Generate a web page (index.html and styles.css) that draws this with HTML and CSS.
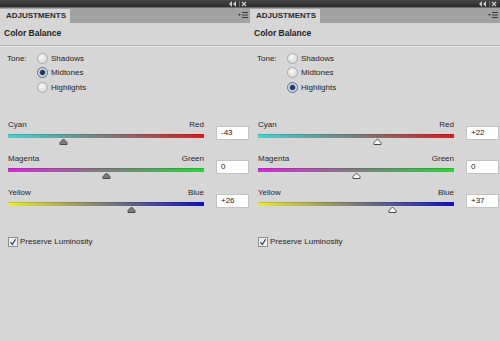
FILE: index.html
```html
<!DOCTYPE html>
<html>
<head>
  <meta charset="utf-8">
  <title>Adjustments</title>
  <link rel="stylesheet" href="styles.css">
</head>
<body>
<div class="panels">

  <div class="panel">
    <div class="titlebar">
      <svg class="tb-icons" width="18" height="6" viewBox="0 0 18 6">
        <polygon points="3,0 3,6 0,3" fill="#c9c9c9"/>
        <polygon points="7,0 7,6 4,3" fill="#c9c9c9"/>
        <rect x="10" y="0" width="1" height="6" fill="#6a6a6a"/>
        <path d="M13 1 L17 5 M17 1 L13 5" stroke="#c9c9c9" stroke-width="1.3"/>
      </svg>
    </div>
    <div class="tabrow">
      <div class="tab">ADJUSTMENTS</div>
      <svg class="menu" width="10" height="6" viewBox="0 0 10 6">
        <polygon points="0,2 3,2 1.5,4" fill="#3a3a3a"/>
        <rect x="4" y="0" width="6" height="1" fill="#3a3a3a"/>
        <rect x="4" y="2.5" width="6" height="1" fill="#3a3a3a"/>
        <rect x="4" y="5" width="6" height="1" fill="#3a3a3a"/>
      </svg>
    </div>
    <div class="content">
      <div class="heading">Color Balance</div>

      <div class="tone">
        <div class="tone-label">Tone:</div>
        <div class="radios">
          <div class="radio-row"><span class="radio"></span>Shadows</div>
          <div class="radio-row"><span class="radio on"></span>Midtones</div>
          <div class="radio-row"><span class="radio"></span>Highlights</div>
        </div>
      </div>

      <div class="sliders">
        <div class="slider-row">
          <div class="slider">
            <div class="ends"><span>Cyan</span><span>Red</span></div>
            <div class="track cyan-red">
              <svg class="thumb" style="left: 28.5%" width="9" height="7" viewBox="0 0 9 7"><path d="M1 6.5 V4.5 L4.5 1 L8 4.5 V6.5 Z" fill="#7c7c7c" stroke="#4a4a4a"/></svg>
            </div>
          </div>
          <div class="value">-43</div>
        </div>
        <div class="slider-row">
          <div class="slider">
            <div class="ends"><span>Magenta</span><span>Green</span></div>
            <div class="track magenta-green">
              <svg class="thumb" style="left: 50%" width="9" height="7" viewBox="0 0 9 7"><path d="M1 6.5 V4.5 L4.5 1 L8 4.5 V6.5 Z" fill="#7c7c7c" stroke="#4a4a4a"/></svg>
            </div>
          </div>
          <div class="value">0</div>
        </div>
        <div class="slider-row">
          <div class="slider">
            <div class="ends"><span>Yellow</span><span>Blue</span></div>
            <div class="track yellow-blue">
              <svg class="thumb" style="left: 63%" width="9" height="7" viewBox="0 0 9 7"><path d="M1 6.5 V4.5 L4.5 1 L8 4.5 V6.5 Z" fill="#7c7c7c" stroke="#4a4a4a"/></svg>
            </div>
          </div>
          <div class="value">+26</div>
        </div>
      </div>

      <div class="check-row">
        <svg class="checkbox" width="10" height="10" viewBox="0 0 10 10">
          <rect x="0.5" y="0.5" width="9" height="9" fill="#eeeeee" stroke="#8e8e8e"/>
          <path d="M2.5 5.2 L4.3 7.5 L7.6 2.2" fill="none" stroke="#2d3f66" stroke-width="1.2"/>
        </svg>
        Preserve Luminosity
      </div>
    </div>
  </div>

  <div class="panel">
    <div class="titlebar">
      <svg class="tb-icons" width="18" height="6" viewBox="0 0 18 6">
        <polygon points="3,0 3,6 0,3" fill="#c9c9c9"/>
        <polygon points="7,0 7,6 4,3" fill="#c9c9c9"/>
        <rect x="10" y="0" width="1" height="6" fill="#6a6a6a"/>
        <path d="M13 1 L17 5 M17 1 L13 5" stroke="#c9c9c9" stroke-width="1.3"/>
      </svg>
    </div>
    <div class="tabrow">
      <div class="tab">ADJUSTMENTS</div>
      <svg class="menu" width="10" height="6" viewBox="0 0 10 6">
        <polygon points="0,2 3,2 1.5,4" fill="#3a3a3a"/>
        <rect x="4" y="0" width="6" height="1" fill="#3a3a3a"/>
        <rect x="4" y="2.5" width="6" height="1" fill="#3a3a3a"/>
        <rect x="4" y="5" width="6" height="1" fill="#3a3a3a"/>
      </svg>
    </div>
    <div class="content">
      <div class="heading">Color Balance</div>

      <div class="tone">
        <div class="tone-label">Tone:</div>
        <div class="radios">
          <div class="radio-row"><span class="radio"></span>Shadows</div>
          <div class="radio-row"><span class="radio"></span>Midtones</div>
          <div class="radio-row"><span class="radio on"></span>Highlights</div>
        </div>
      </div>

      <div class="sliders">
        <div class="slider-row">
          <div class="slider">
            <div class="ends"><span>Cyan</span><span>Red</span></div>
            <div class="track cyan-red">
              <svg class="thumb" style="left: 61%" width="9" height="7" viewBox="0 0 9 7"><path d="M1 6.5 V4.5 L4.5 1 L8 4.5 V6.5 Z" fill="#ffffff" stroke="#4a4a4a"/></svg>
            </div>
          </div>
          <div class="value">+22</div>
        </div>
        <div class="slider-row">
          <div class="slider">
            <div class="ends"><span>Magenta</span><span>Green</span></div>
            <div class="track magenta-green">
              <svg class="thumb" style="left: 50%" width="9" height="7" viewBox="0 0 9 7"><path d="M1 6.5 V4.5 L4.5 1 L8 4.5 V6.5 Z" fill="#ffffff" stroke="#4a4a4a"/></svg>
            </div>
          </div>
          <div class="value">0</div>
        </div>
        <div class="slider-row">
          <div class="slider">
            <div class="ends"><span>Yellow</span><span>Blue</span></div>
            <div class="track yellow-blue">
              <svg class="thumb" style="left: 68.5%" width="9" height="7" viewBox="0 0 9 7"><path d="M1 6.5 V4.5 L4.5 1 L8 4.5 V6.5 Z" fill="#ffffff" stroke="#4a4a4a"/></svg>
            </div>
          </div>
          <div class="value">+37</div>
        </div>
      </div>

      <div class="check-row">
        <svg class="checkbox" width="10" height="10" viewBox="0 0 10 10">
          <rect x="0.5" y="0.5" width="9" height="9" fill="#eeeeee" stroke="#8e8e8e"/>
          <path d="M2.5 5.2 L4.3 7.5 L7.6 2.2" fill="none" stroke="#2d3f66" stroke-width="1.2"/>
        </svg>
        Preserve Luminosity
      </div>
    </div>
  </div>

</div>
</body>
</html>
```

FILE: styles.css
```css
body {
  margin: 0;
  background: #d6d6d6;
  font-family: "Liberation Sans", Arial, sans-serif;
  font-size: 8px;
  color: #1e1e1e;
}

.panels {
  display: flex;
  height: 341px;
}

.panel {
  width: 250px;
  display: flex;
  flex-direction: column;
}

/* barra escura do topo */
.titlebar {
  height: 7px;
  background: linear-gradient(#454545, #2c2c2c);
  border-bottom: 1px solid #6b6b6b;
  display: flex;
  justify-content: flex-end;
  align-items: center;
  padding-right: 2px;
}

.tb-icons {
  display: block;
  margin-right: 1px;
}

.tabrow {
  height: 15px;
  background: #a2a2a2;
  display: flex;
  align-items: flex-end;
  justify-content: space-between;
}

.tab {
  width: 64px;
  height: 14px;
  padding-left: 6px;
  background: #d6d6d6;
  font-weight: bold;
  font-size: 8px;
  line-height: 14px;
  color: #2a2a2a;
}

.menu {
  display: block;
  margin: 0 2px 5px 0;
}

.content {
  flex: 1;
}

.heading {
  height: 23px;
  padding: 5px 0 0 4px;
  box-sizing: border-box;
  font-weight: bold;
  font-size: 8.5px;
  line-height: 10px;
  border-bottom: 1px solid #b4b4b4;
  box-shadow: 0 1px 0 #e6e6e6;
}

.tone {
  display: flex;
  margin-top: 5px;
  padding-left: 7px;
}

.tone-label {
  width: 30px;
  line-height: 14.5px;
  padding-top: 1px;
}

.radio-row {
  display: flex;
  align-items: center;
  height: 14.5px;
  gap: 3px;
}

.radio {
  width: 9px;
  height: 9px;
  border-radius: 50%;
  border: 1px solid #a9a9a9;
  background: radial-gradient(circle at 40% 35%, #f7f7f7, #d2d2d2);
  box-sizing: content-box;
  position: relative;
}

.radio.on {
  border-color: #56698a;
  background: radial-gradient(circle, #1c2f52 0, #2b4673 2.2px, #c8d2e0 3.3px, #e8ecf2 5px);
}

.sliders {
  margin-top: 25px;
}

.slider-row {
  display: flex;
  height: 34px;
}

.slider {
  width: 196px;
  margin-left: 8px;
}

.ends {
  display: flex;
  justify-content: space-between;
  line-height: 10px;
  height: 10px;
  color: #262626;
}

.track {
  position: relative;
  height: 4px;
  margin-top: 4px;
  box-shadow: inset 0 1px 0 rgba(0, 0, 0, 0.15);
}

.cyan-red {
  background: linear-gradient(to right, #3fd6d4, #7c7c7c 50%, #dc1c1c);
}

.magenta-green {
  background: linear-gradient(to right, #dc26dc, #7e7e7e 50%, #26d838);
}

.yellow-blue {
  background: linear-gradient(to right, #ecec2c, #7c7c7c 50%, #1212c4);
}

.thumb {
  position: absolute;
  top: 4px;
  margin-left: -4.5px;
  display: block;
}

.value {
  width: 27px;
  height: 12px;
  margin: 6px 0 0 12px;
  padding-left: 4px;
  background: #ffffff;
  border: 1px solid #c2c2c2;
  line-height: 12px;
  color: #1a1a1a;
}

.check-row {
  display: flex;
  align-items: center;
  gap: 2px;
  margin-top: 15px;
  padding-left: 8px;
  line-height: 10px;
}

.checkbox {
  display: block;
}
```
